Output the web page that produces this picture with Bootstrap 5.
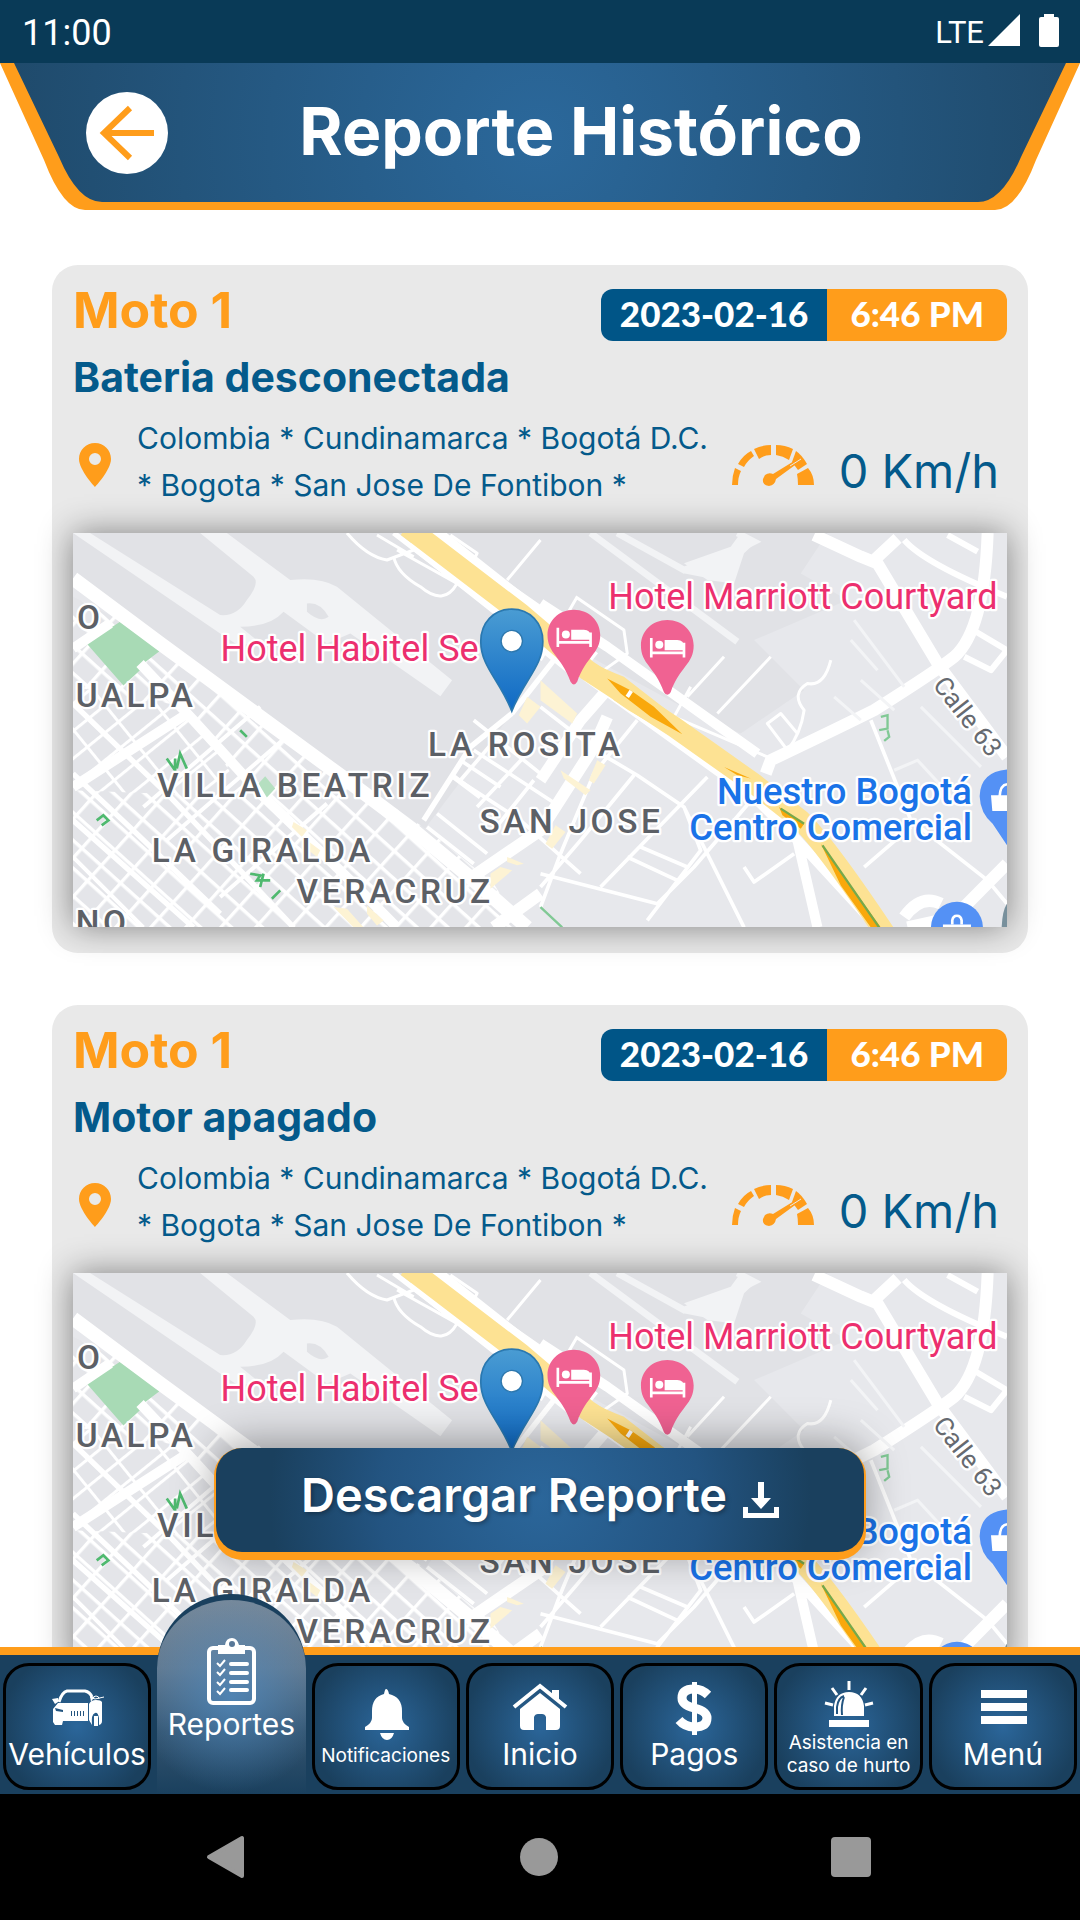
<!DOCTYPE html>
<html lang="es">
<head>
<meta charset="utf-8">
<meta name="viewport" content="width=device-width, initial-scale=1">
<title>Reporte Histórico</title>
<link href="https://cdn.jsdelivr.net/npm/bootstrap@5.3.0/dist/css/bootstrap.min.css" rel="stylesheet">
<style>
  :root { --amber: #ff9d1b; --navy: #1a405e; --ink: #005587; }
  body { font-family: Inter, "Open Sans", sans-serif; background: #fff; overflow: hidden; }
  .status-bar { background: #093a57; height: 63px; font: 400 36px/40px Roboto, sans-serif; padding: 2px 20px 0 22px; }
  .status-bar .net { font-size: 31px; }
  .app-head { display: grid; height: 147px; }
  .app-head > * { grid-area: 1 / 1; min-width: 0; min-height: 0; }
  .app-head .head-row { padding: 0 86px 8px; }
  .back-btn { width: 82px; height: 82px; background: #fff; border: 0; padding: 0; line-height: 0; }
  .app-title { font-size: 66px; line-height: 80px; font-weight: 700; padding-bottom: 4px; }
  .feed { min-height: 0; overflow: hidden; padding: 55px 52px 0; }
  .report { background: #e9e9e9; border-radius: 26px; padding: 24px 21px 26px; margin-bottom: 52px; }
  .unit-name { color: var(--amber); font-size: 50px; line-height: 42px; font-weight: 700; }
  .stamp { border-radius: 12px; font-family: Lato, sans-serif; font-size: 35px; line-height: 48px; font-weight: 900; }
  .stamp .day { background: var(--ink); padding: 0 19px 4px; }
  .stamp .hour { background: var(--amber); padding: 0 23px 4px; }
  .event-name { color: #045a8b; font-size: 41px; line-height: 48px; font-weight: 700; margin: 12px 0 14px; }
  .place { color: #045a8b; font-size: 30px; line-height: 47px; padding-right: 20px; }
  .speed { color: #045a8b; font-size: 47px; line-height: 56px; padding-top: 18px; }
  .sink { margin-top: 6px; }
  .map-box { margin-top: 24px; box-shadow: 0 0 32px rgba(0,0,0,.45); line-height: 0; }
  .map-box svg { width: 100%; height: auto; }
  .lbl { font-family: Roboto, sans-serif; stroke: #fff; stroke-width: 14px; stroke-linejoin: round; paint-order: stroke; }
  .area { font-size: 100px; font-weight: 500; fill: #5c6066; letter-spacing: 11px; }
  .hotel { font-size: 108px; fill: #ec2f6e; }
  .mall { font-size: 109px; font-weight: 500; fill: #1a73e8; }
  .road-name { font-size: 78px; fill: #666a70; }
  .dl-btn { left: 19.8%; right: 19.8%; bottom: calc(100% + 87px); height: 112px; border: 2px solid var(--amber); border-width: 0 2px 8px; border-radius: 28px; padding: 0; background: var(--amber); box-shadow: 0 -6px 40px rgba(0,0,0,.35); color: #fff; }
  .dl-face { height: 104px; border-radius: 26px; gap: 16px; padding-bottom: 10px; font-size: 47px; font-weight: 600; background: radial-gradient(circle at 50% 50%, #2b669a 0, #235481 160px, #1a405e 270px); text-shadow: 2px 2px 4px rgba(0,0,0,.3); }
  .dl-face svg { margin-top: 10px; }
  .tabs-bar { display: grid; grid-template-columns: repeat(7, minmax(0, 1fr)); background: var(--navy); border-top: 8px solid var(--amber); padding: 8px 3px 4px; gap: 6px; z-index: 3; }
  .tab { min-width: 0; height: 127px; border: 3px solid #000; border-radius: 26px; color: #fff; text-decoration: none; font-size: 30px; line-height: 36px; padding-top: 14px; text-align: center; white-space: nowrap; background: radial-gradient(circle at 50% 50%, #2b669a 0, #1a405e 76px); }
  .tab svg { height: 56px; width: 64px; }
  .tab .caption-sm { font-size: 19px; line-height: 23px; }
  .tab.now { height: 200px; margin: -69px 0 -4px; border: 6px solid var(--navy); border-width: 6px 0 0; border-radius: 75px 75px 0 0; padding-top: 36px; background: radial-gradient(circle at 50% 50%, rgba(80,140,195,.75) 0, rgba(80,140,195,0) 95px), linear-gradient(#75899c, #64798d 35%, #34546f 68%, #1a405e); }
  .tab.now svg { height: 70px; }
  .tab svg.short-icon { height: 51px; }
  .sys-bar { height: 126px; background: #000; padding: 0 208px 0 205px; }
  .sys-bar button { background: none; border: 0; padding: 0; line-height: 0; }
</style>
<script src="https://cdn.jsdelivr.net/npm/bootstrap@5.3.0/dist/js/bootstrap.bundle.min.js"></script>
</head>
<body class="d-flex flex-column vh-100 m-0">

<!-- shared drawings -->
<svg width="0" height="0" class="position-absolute" aria-hidden="true">
  <defs>
    <pattern id="blocks" width="78" height="62" patternUnits="userSpaceOnUse" patternTransform="rotate(42)">
      <rect width="78" height="62" fill="#e4e5e9"/><path d="M0 0H78M0 0V62" stroke="#fff" stroke-width="20"/>
    </pattern>
    <pattern id="blocks2" width="64" height="120" patternUnits="userSpaceOnUse" patternTransform="rotate(51)">
      <rect width="64" height="120" fill="#e4e5e9"/><path d="M0 0H64M0 0V120" stroke="#fff" stroke-width="18"/>
    </pattern>
    <linearGradient id="pinBlue" x1="0" y1="0" x2="0" y2="1"><stop offset="0" stop-color="#4a9cd3"/><stop offset="1" stop-color="#0f69c4"/></linearGradient>
    <radialGradient id="headGlow" gradientUnits="userSpaceOnUse" cx="540" cy="75" r="540"><stop offset="0" stop-color="#2b689b"/><stop offset="1" stop-color="#1f4a6b"/></radialGradient>
    <g id="bed"><path d="M0-72C46-72 79-38 79 4C79 60 38 66 10 144Q0 160-10 144C-38 66-79 60-79 4C-79-38-46-72 0-72Z" fill="#f06292"/><path d="M-48-18V40M-48 26H50M50 40V-4" stroke="#fff" stroke-width="8" fill="none"/><path d="M-8-12H30Q50-12 50 8V18H-8Z" fill="#fff"/><circle cx="-24" cy="2" r="12" fill="#fff"/></g>
    <symbol id="streets" viewBox="0 0 2799 1182">
      <rect width="2799" height="1182" fill="#e7e8ec"/>
      <g transform="translate(-39,-39)">
        <path d="M39 39H1460L2300 39L2220 160L2360 240L2080 360L2230 510L2040 640L1920 590L1440 330L1354 580L1090 930L1040 900L39 175Z" fill="#e1e2e6"/>
        <path d="M90 39L480 285Q530 290 560 240Q600 190 580 170L420 39H500L690 180Q780 170 830 200L1175 480L1140 528L870 340L800 370L670 275Q630 320 540 320L590 360L540 380L480 340L39 39Z" fill="#f2f3f5"/>
        <path d="M740 250Q780 245 805 290Q780 310 740 275Z" fill="#e1e2e6"/>
        <path d="M39 230L180 300L440 480L1110 935L1300 1090L1380 1221H39Z" fill="url(#blocks)"/>
        <path d="M39 500L380 560L560 830L39 810Z" fill="url(#blocks2)"/>
        <path d="M80 370L180 305L300 392L250 430L240 450L190 496Z" fill="#a8dab5"/>
        <g fill="none" stroke="#fff" stroke-linejoin="round">
          <path d="M39 175L300 370L860 780L1060 930L1240 1080L1400 1221" stroke-width="42"/>
          <path d="M39 385L150 310M39 800L390 575M240 430L400 600L600 820L880 1090L1010 1221" stroke-width="30"/>
          <path d="M39 550L330 830L540 1050L700 1221M39 760L230 940L480 1180M39 900L400 1221" stroke-width="16"/>
          <path d="M39 1010L250 1221M250 860L600 560M320 960L690 640M480 1130L800 850" stroke-width="12"/>
          <path d="M1354 580L1230 680L1090 900M1180 770L1260 830M1354 580L1480 420M1000 39L1380 330" stroke-width="16"/>
          <path d="M860 39Q920 110 980 120L1060 90M950 45L1060 110M1000 110Q1010 160 1080 200Q1150 260 1190 190L1010 90M1170 45L1250 100L1240 120L1440 260M1340 180L1440 60" stroke-width="9"/>
          <path d="M1220 1080L1440 930L1600 680L1640 590M1300 1221L1440 1120" stroke-width="36"/>
          <path d="M1180 770L1380 900L1560 1060M1240 690L1500 860M1100 920L1240 1030M1130 880L1280 1000M1240 600L1440 760M1200 720L1320 800M1320 640L1200 780M1400 700L1250 860M1420 780L1300 930" stroke-width="11"/>
        </g>
        <g fill="#fdf3d4"><path d="M1400 530L1440 560L1400 610L1375 585Z"/><path d="M700 905L740 930L725 950L695 920ZM740 960L780 990L770 1010L745 990ZM820 1160L860 1165L910 1221H880ZM920 1155L970 1200L950 1215L920 1180ZM1290 1060L1320 1040L1355 1050L1290 1105ZM1340 1010L1390 1030L1370 1035L1340 1025Z"/></g>
        <g fill="none" stroke="#4fb96f" stroke-width="8"><path d="M540 630L560 650M320 715L345 750V715M350 745L360 700L380 745M110 900L130 885L145 900L125 915M570 1060L600 1065L590 1080L630 1080M600 1100L610 1060M635 1135L660 1110"/></g>
        <path d="M595 790L615 768L645 805L620 832Z" fill="#b5dfc0"/>
      </g>
      <g transform="translate(1401,-39)">
        <path d="M150 39L590 365M230 39L430 150L600 85L640 65L590 39M430 150L560 175" fill="none" stroke="#f2f3f5" stroke-width="20"/>
        <path d="M430 130L570 80L600 39L642 70L610 100L580 190L500 180Z" fill="#f2f3f5"/>
        <g fill="none" stroke="#fff" stroke-linejoin="round">
          <path d="M820 45L960 110L1010 130L1190 430L1398 710M1070 55L1000 120M1340 39Q1330 330 1240 410Q1190 450 1000 570Q900 620 690 720L675 760" stroke-width="36"/>
          <path d="M0 320L140 470L640 830L770 960L830 1221M770 960L1010 1221" stroke-width="30"/>
          <path d="M0 250L200 380L650 700" stroke-width="30"/>
          <path d="M1398 1030L1240 1190L1100 1221M1090 1190Q1140 1120 1200 1150" stroke-width="36"/>
          <path d="M190 520L120 600L0 780" stroke-width="34"/>
          <path d="M1090 60Q1150 130 1398 230M1220 45L1310 95M1280 320L1398 390L1350 450L1270 410" stroke-width="18"/>
          <path d="M0 560L180 700L290 765L430 860L610 1221M500 770L180 1100M290 600L160 760L60 1000L0 1160M0 1060L350 1150L460 1040L640 830M280 765L120 960L0 1100M990 600L1110 900L1340 1080L1398 1150M1110 920L970 1040M610 1040L640 1085L760 1000M430 860L480 990L320 1200M260 1010L410 1080M300 980L440 1040" stroke-width="11"/>
          <path d="M105 230L250 330L260 400L190 450M440 530L550 410M530 580L690 410M450 500L400 590L680 710M870 420Q850 500 800 490Q750 520 790 570Q780 640 740 690L680 610L720 580L770 640M110 230L0 420" stroke-width="9"/>
        </g>
        <path d="M930 360L1010 450M940 300L1090 500M1140 560L1320 740M1060 750L1130 720L1250 850M880 530L960 600M960 480L1060 570" fill="none" stroke="#f3f4f6" stroke-width="9"/>
        <path d="M0 480L110 580L95 610L0 540ZM170 720L195 735L160 790L145 780ZM45 915L75 935L35 985L15 970ZM60 750L150 810L135 825L70 775Z" fill="#fdf3d4"/>
        <path d="M-365 39L-60 280L140 440" fill="none" stroke="#fff" stroke-width="104"/>
        <path d="M-400 20L-60 280L140 450L400 620L640 790L780 900Q860 980 1040 1250" fill="none" stroke="#fde293" stroke-width="62"/>
        <path d="M140 420Q200 450 250 470L430 610L420 650Q300 600 220 540Z" fill="#fde293"/>
        <path d="M200 475L270 510L340 560L425 642L330 590L240 520ZM550 740L630 775L590 765ZM715 860L790 910L780 925L725 885ZM840 970L1020 1221H990L900 1095Z" fill="#f9a80c"/>
        <path d="M845 975L1015 1221M720 865L790 910" fill="none" stroke="#76a94c" stroke-width="7"/>
        <path d="M260 530L272 512" stroke="#fff" stroke-width="12"/>
        <path d="M1020 590L1040 585V625L1015 630M1040 630L1045 650L1030 662M0 1160L65 1221" fill="none" stroke="#81c995" stroke-width="7"/>
        <use href="#bed" x="100" y="341"/>
        <use href="#bed" x="380" y="372"/>
        <g fill="#5491f5"><path d="M1398 748Q1318 755 1316 828Q1318 880 1355 910L1398 975Z"/><circle cx="1248" cy="1222" r="78"/></g>
        <path d="M1350 825H1398V872H1354ZM1206 1212H1290V1221H1206Z" fill="#fff"/>
        <path d="M1376 828Q1378 794 1398 792M1234 1212V1200Q1236 1186 1248 1186Q1260 1186 1262 1200V1212" fill="none" stroke="#fff" stroke-width="8"/>
        <path d="M1398 1150Q1384 1170 1382 1221H1398Z" fill="#78909c"/>
      </g>
    </symbol>
    <g id="marker"><path d="M1315 228C1370 228 1408 270 1408 325C1408 400 1352 440 1315 534C1278 440 1222 400 1222 325C1222 270 1260 228 1315 228Z" fill="url(#pinBlue)" stroke="#2a78b0" stroke-width="5"/><circle cx="1315" cy="324" r="32" fill="#fff" stroke="#2d77ad" stroke-width="4"/></g>
    <symbol id="pin" viewBox="0 0 32 44"><path fill="#ff9d1b" fill-rule="evenodd" d="M16 0C7 0 0 7 0 16C0 27 16 44 16 44C16 44 32 27 32 16C32 7 25 0 16 0ZM16 10A6 6 0 1 1 16 22A6 6 0 0 1 16 10Z"/></symbol>
    <symbol id="gauge" viewBox="0 0 84 42">
      <g fill="#ff9d1b"><path d="M1 41Q1 32 4 24L10 27Q7 33 7 41Z"/><path d="M7 20Q12 11 20 7L23 12Q16 17 13 23Z"/><path d="M23 5Q31 1 40 1V11Q33 11 28 15Z"/><path d="M45 1Q54 1 62 5L58 16Q52 12 45 11Z"/><path d="M65 7Q71 11 76 20L67 26L61 18Z"/><path d="M77 24Q83 31 83 41L67 41Q67 35 66 30Z"/><path d="M34 31Q38 28 42 30L68 14L71 16L45 35Q44 41 38 42Q31 41 32 35Z"/></g>
      <path d="M59 22L70 15" stroke="#e9e9e9" stroke-width="1"/>
    </symbol>
  </defs>
</svg>

<div class="status-bar d-flex justify-content-between align-items-center text-white flex-shrink-0">
  <span>11:00</span>
  <span class="d-flex align-items-center">
    <span class="net me-1">LTE</span>
    <svg class="mb-1" width="72" height="36" viewBox="0 0 72 36" fill="#fff" aria-hidden="true"><path d="M32 1V33H0ZM56 4V1H66V4H69Q71 4 71 6V32Q71 34 69 34H53Q51 34 51 32V6Q51 4 53 4Z"/></svg>
  </span>
</div>

<header class="app-head flex-shrink-0">
  <svg class="w-100 h-100" viewBox="0 0 1080 147" preserveAspectRatio="none" aria-hidden="true">
    <path d="M0 0H1080L1036 97Q1017 147 995 147H85Q63 147 44 97Z" fill="#ff9d1b"/>
    <path d="M14 0H1066L1021 94Q1002 139 978 139H102Q78 139 59 94Z" fill="url(#headGlow)"/>
  </svg>
  <div class="head-row d-flex align-items-center">
    <button class="back-btn rounded-circle flex-shrink-0" type="button" aria-label="Volver">
      <svg width="82" height="82" viewBox="0 0 82 82"><path d="M68 41H18M44 16L18 41L44 66" fill="none" stroke="#ff9d1b" stroke-width="6"/></svg>
    </button>
    <h1 class="app-title text-white text-center flex-grow-1 m-0">Reporte Histórico</h1>
  </div>
</header>

<main class="feed flex-grow-1">
  <article class="report">
    <div class="d-flex justify-content-between">
      <h2 class="unit-name m-0">Moto 1</h2>
      <div class="stamp d-flex text-white overflow-hidden"><span class="day">2023-02-16</span><span class="hour">6:46 PM</span></div>
    </div>
    <h3 class="event-name">Bateria desconectada</h3>
    <div class="d-flex align-items-center">
      <svg class="sink ms-1 me-4 flex-shrink-0" width="36" height="44" aria-hidden="true"><use href="#pin"/></svg>
      <p class="place flex-grow-1 m-0">Colombia * Cundinamarca * Bogotá D.C. * Bogota * San Jose De Fontibon *</p>
      <svg class="sink me-4 flex-shrink-0" width="84" height="42" aria-hidden="true"><use href="#gauge"/></svg>
      <span class="speed text-nowrap pe-2">0 Km/h</span>
    </div>
    <div class="map-box">
      <svg viewBox="0 0 2799 1182" role="img" aria-label="Mapa">
        <use href="#streets" width="2799" height="1182"/>
        <g class="lbl area"><text x="12" y="288">O</text><text x="8" y="520">UALPA</text><text x="252" y="792">VILLA BEATRIZ</text><text x="236" y="986">LA GIRALDA</text><text x="670" y="1110">VERACRUZ</text><text x="8" y="1202">NO</text><text x="1064" y="668">LA ROSITA</text><text x="1218" y="900">SAN JOSE</text></g>
        <g class="lbl hotel"><text x="442" y="383">Hotel Habitel Se</text><text x="1604" y="229">Hotel Marriott Courtyard</text></g>
        <g class="lbl mall" text-anchor="end"><text x="2694" y="811">Nuestro Bogotá</text><text x="2694" y="920">Centro Comercial</text></g>
        <text class="lbl road-name" transform="translate(2574,456) rotate(52)">Calle 63</text>
        <use href="#marker"/>
      </svg>
    </div>
  </article>

  <article class="report">
    <div class="d-flex justify-content-between">
      <h2 class="unit-name m-0">Moto 1</h2>
      <div class="stamp d-flex text-white overflow-hidden"><span class="day">2023-02-16</span><span class="hour">6:46 PM</span></div>
    </div>
    <h3 class="event-name">Motor apagado</h3>
    <div class="d-flex align-items-center">
      <svg class="sink ms-1 me-4 flex-shrink-0" width="36" height="44" aria-hidden="true"><use href="#pin"/></svg>
      <p class="place flex-grow-1 m-0">Colombia * Cundinamarca * Bogotá D.C. * Bogota * San Jose De Fontibon *</p>
      <svg class="sink me-4 flex-shrink-0" width="84" height="42" aria-hidden="true"><use href="#gauge"/></svg>
      <span class="speed text-nowrap pe-2">0 Km/h</span>
    </div>
    <div class="map-box">
      <svg viewBox="0 0 2799 1182" role="img" aria-label="Mapa">
        <use href="#streets" width="2799" height="1182"/>
        <g class="lbl area"><text x="12" y="288">O</text><text x="8" y="520">UALPA</text><text x="252" y="792">VILLA BEATRIZ</text><text x="236" y="986">LA GIRALDA</text><text x="670" y="1110">VERACRUZ</text><text x="1218" y="900">SAN JOSE</text></g>
        <g class="lbl hotel"><text x="442" y="383">Hotel Habitel Se</text><text x="1604" y="229">Hotel Marriott Courtyard</text></g>
        <g class="lbl mall" text-anchor="end"><text x="2694" y="811">Nuestro Bogotá</text><text x="2694" y="920">Centro Comercial</text></g>
        <text class="lbl road-name" transform="translate(2574,456) rotate(52)">Calle 63</text>
        <use href="#marker"/>
      </svg>
    </div>
  </article>
</main>

<div class="position-relative flex-shrink-0">
  <button class="dl-btn position-absolute" type="button">
    <span class="dl-face d-flex align-items-center justify-content-center">Descargar Reporte
      <svg width="36" height="36" viewBox="0 0 36 36" aria-hidden="true"><path d="M15 0H21V16H28L18 27L8 16H15ZM0 25H5V31H31V25H36V36H0Z" fill="#fff"/></svg>
    </span>
  </button>
  <nav class="tabs-bar position-relative">
    <a class="tab d-flex flex-column align-items-center" href="#">
      <svg viewBox="0 0 64 56" aria-hidden="true"><path d="M14 22Q17 12 22 11H40Q45 12 47 17" fill="none" stroke="#fff" stroke-width="3"/><path d="M7 19L13 18V22L10 24ZM8 29L13 23H43V41H18L17 45H10L8 42ZM46 22Q47 19 50 18L45 16M57 22V41Q57 44 54 45V38Q53 32 50 33Q46 34 47 45L44 40V24Q46 20 51 20Q56 20 57 22Z" fill="#fff"/><path d="M45 17L50 19L59 17M48 19A3 3 0 1 1 54 19" stroke="#fff" fill="none" stroke-width="1"/><path d="M49 36H53V46H49Z" fill="#fff"/><path d="M10 28L18 30V32L11 31ZM26 31H27V36H26ZM29 31H30V36H29ZM32 31H33V36H32ZM35 31H36V36H35ZM38 31H39V36H38Z" fill="#235580"/></svg>
      <span>Vehículos</span>
    </a>
    <a class="tab now d-flex flex-column align-items-center" href="#" aria-current="page">
      <svg viewBox="0 0 64 70" aria-hidden="true"><rect x="10" y="12" width="45" height="55" rx="4" fill="none" stroke="#fff" stroke-width="4"/><path d="M19 9H26Q27 2 33 2Q38 2 40 9H46V18H19Z" fill="#fff"/><circle cx="33" cy="8" r="3" fill="#587898"/><path d="M32 28H48M32 37H48M32 46H48M32 54H48" stroke="#fff" stroke-width="4" stroke-linecap="round"/><path d="M18 27L21 30L26 24M18 36L21 39L26 33M18 46L21 49L26 43M18 55L21 58L26 52" fill="none" stroke="#fff" stroke-width="2"/></svg>
      <span>Reportes</span>
    </a>
    <a class="tab d-flex flex-column align-items-center" href="#">
      <svg class="mt-1" viewBox="0 0 64 56" aria-hidden="true"><path d="M32 5Q34 5 35 10Q48 13 48 27V34Q48 39 55 43V46H11V43Q18 39 18 34V27Q18 13 30 10Q31 5 32 5ZM26 49H40Q38 56 33 56Q28 56 26 49Z" fill="#fff"/></svg>
      <span class="caption-sm mt-1">Notificaciones</span>
    </a>
    <a class="tab d-flex flex-column align-items-center" href="#">
      <svg viewBox="0 0 64 56" aria-hidden="true"><path d="M6 27L32 6L58 27" fill="none" stroke="#fff" stroke-width="4"/><path d="M44 10H51V20L44 15ZM12 29L32 13L52 29V46Q52 50 48 50H38V37Q37 34 34 34H30Q27 34 26 37V50H16Q12 50 12 46Z" fill="#fff"/></svg>
      <span>Inicio</span>
    </a>
    <a class="tab d-flex flex-column align-items-center" href="#">
      <svg viewBox="0 0 64 56" aria-hidden="true"><path d="M46 15Q40 9 32 9Q20 9 20 18Q20 25 32 28Q45 31 45 38Q45 47 32 47Q23 47 17 40" fill="none" stroke="#fff" stroke-width="9"/><path d="M30 2H35V55H30Z" fill="#fff"/></svg>
      <span>Pagos</span>
    </a>
    <a class="tab d-flex flex-column align-items-center" href="#">
      <svg class="short-icon" viewBox="0 0 64 51" aria-hidden="true"><path d="M17 36V26Q19 12 32 12Q45 12 47 26V36ZM12 40H52V47H12Z" fill="#fff"/><path d="M20 34V27Q21 18 27 16M25 35Q24 25 27 17" stroke="#235580" stroke-width="2" fill="none"/><path d="M32 1V10M20 15L15 8M44 15L49 8M16 25L8 23M48 25L56 23" stroke="#fff" stroke-width="3" fill="none"/></svg>
      <span class="caption-sm text-wrap">Asistencia en caso de hurto</span>
    </a>
    <a class="tab d-flex flex-column align-items-center" href="#">
      <svg viewBox="0 0 64 56" aria-hidden="true"><path d="M10 10H56V18H10ZM10 23H56V31H10ZM10 36H56V44H10Z" fill="#fff"/></svg>
      <span>Menú</span>
    </a>
  </nav>
</div>

<footer class="sys-bar d-flex justify-content-between align-items-center flex-shrink-0">
  <button type="button" aria-label="Atrás"><svg width="42" height="44" viewBox="0 0 42 44"><path d="M4 22L37 3V41Z" fill="#999" stroke="#999" stroke-width="4" stroke-linejoin="round"/></svg></button>
  <button type="button" aria-label="Inicio del sistema"><svg width="42" height="42" viewBox="0 0 42 42"><circle cx="21" cy="21" r="19" fill="#999"/></svg></button>
  <button type="button" aria-label="Recientes"><svg width="42" height="42" viewBox="0 0 42 42"><rect x="1" y="1" width="40" height="40" rx="4" fill="#999"/></svg></button>
</footer>
</body>
</html>
